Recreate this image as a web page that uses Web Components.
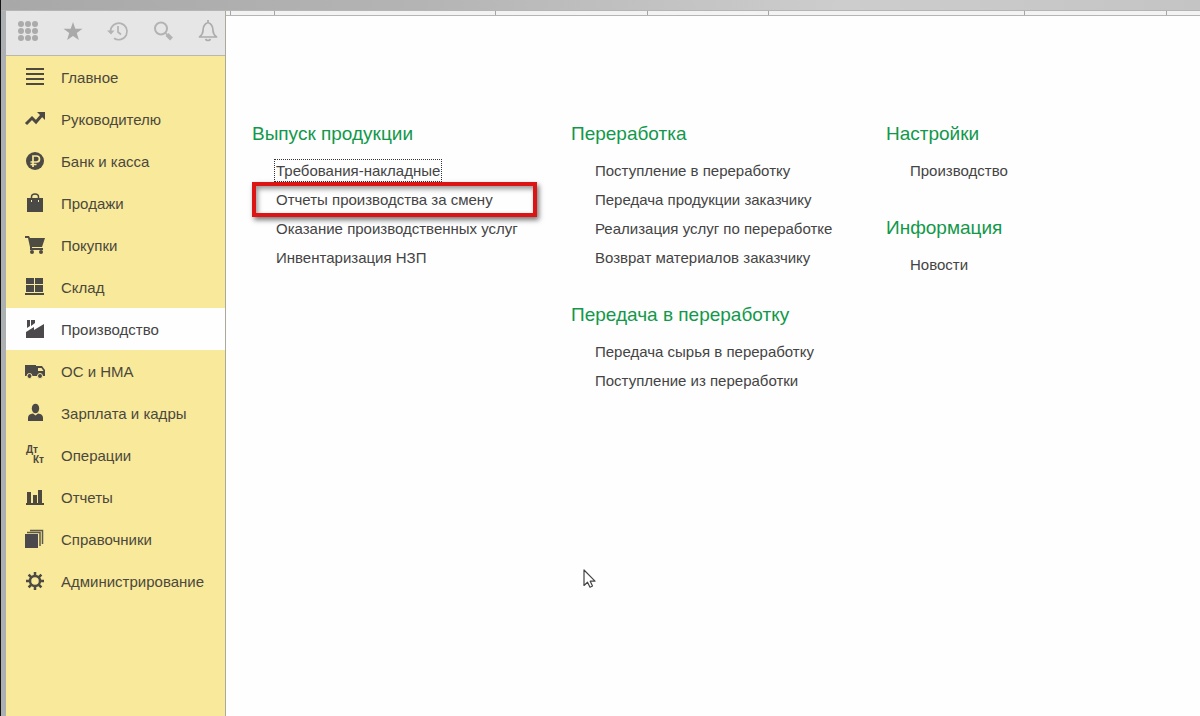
<!DOCTYPE html>
<html lang="ru">
<head>
<meta charset="utf-8">
<title>Производство</title>
<style>
html, body { height: 100%; }
body { margin: 0; font-family: "Liberation Sans", Arial, sans-serif; font-size: 15px; color: #444; background: #fefefe; }
</style>
</head>
<body>
<app-window></app-window>
<script>
const ICONS = {
  grid: '<g fill="#ababab"><circle cx="4" cy="4" r="3"/><circle cx="11" cy="4" r="3"/><circle cx="18" cy="4" r="3"/><circle cx="4" cy="11" r="3"/><circle cx="11" cy="11" r="3"/><circle cx="18" cy="11" r="3"/><circle cx="4" cy="18" r="3"/><circle cx="11" cy="18" r="3"/><circle cx="18" cy="18" r="3"/></g>',
  star: '<path fill="#a9a9a9" d="M11 2l2.300 6.700h7.200l-5.700 4.300 2.100 7L11 15.900 5.100 20l2.100-7L1.500 8.700h7.200z"/>',
  history: '<g fill="none" stroke="#b3b3b3" stroke-width="1.700"><path d="M3.500 11a8.300 8.300 0 1 1 3.500 7.200M11 6v6l3 2.500"/></g><path fill="#b3b3b3" d="M0 10.500h7.500L4 14.500z"/>',
  search: '<circle cx="9" cy="8.500" r="6" fill="none" stroke="#b3b3b3" stroke-width="2"/><path stroke="#b3b3b3" stroke-width="1.700" d="M13 12.500l3 3"/><path stroke="#b3b3b3" stroke-width="4" d="M15 14.500l4.500 4.500"/>',
  bell: '<g fill="none" stroke="#acacac" stroke-width="1.700" stroke-linejoin="round"><path d="M11 2.500c-4 1.500-5 4-5 8 0 3-1 4.500-3.500 6.500h17c-2.500-2-3.500-3.500-3.500-6.500 0-4-1-6.500-5-8zM11 0v3"/><path d="M8.500 19c1 2 4 2 5 0"/></g>',
  lines: '<path stroke="#4d493f" stroke-width="2" d="M2 3h18M2 8h18M2 13h18M2 18h18"/>',
  trend: '<path fill="none" stroke="#4d4844" stroke-width="3" d="M2 16l6-6 4 4 6-7"/><path fill="#4d4844" d="M13 4h8v8z"/>',
  ruble: '<circle cx="11" cy="11" r="9" fill="#4c4a43"/><path fill="none" stroke="#f9e99b" stroke-width="1.700" d="M9 17V6h3.500a3 3 0 0 1 0 6H6.500M6.500 14.500h6"/>',
  bag: '<path fill="#4b4945" d="M3 6h16v14H3z"/><path fill="none" stroke="#f9e99b" stroke-width="1" d="M7.500 10V6M14.500 10V6"/><path fill="none" stroke="#4b4945" stroke-width="1.500" d="M7.500 8V5c0-4 7-4 7 0v3"/>',
  cart: '<path fill="#4e4b42" d="M1 2h4l1 2h15l-3 9H8v1h11v2H6V13L4 4H1z"/><circle cx="8" cy="18" r="2" fill="#4e4b42"/><circle cx="17" cy="18" r="2" fill="#4e4b42"/>',
  store: '<path fill="#4b4945" d="M2 2h8v6H2zM11 2h8v6h-8zM2 9h8v7H2zM11 9h8v7h-8zM1 17h19v2H1z"/>',
  factory: '<path fill="#4b494b" d="M2 20v-6l8-5v3l10-6v14zM3 2h3v6l-3 2zM7 2h4v3L7 8z"/>',
  truck: '<path fill="#4c4a47" d="M1 5h11v11H1zM12 6h6l3 4v6h-9z"/><path fill="#f9e99b" d="M14 8h3.500l2 3H14z"/><g fill="#4c4a47" stroke="#f9e99b"><circle cx="5.500" cy="16" r="2.500"/><circle cx="16" cy="16" r="2.500"/></g>',
  person: '<ellipse cx="11.500" cy="6.500" rx="3.700" ry="4.800" fill="#4b4945"/><path fill="#4b4945" d="M4 19v-3c0-3 2-4 5-4.500l2.500 2 2.500-2c3 .5 5 1.500 5 4.500v3z"/>',
  dtkt: '<g fill="#4b4740" font-size="10" font-weight="bold" font-family="Liberation Sans, sans-serif"><text x="2" y="9">Дт</text><text x="9" y="19">Кт</text></g>',
  chart: '<path fill="#4d493f" d="M3 6h4v11H3zM9 9h4v8H9zM14 4h4v13h-4zM2 17h18v2H2z"/>',
  books: '<path fill="#4b494b" d="M1 6h13v14H1z"/><path fill="none" stroke="#5c5a4c" stroke-width="1.500" d="M3 4.500h13V18M6 2.500h12.500V16"/>',
  gear: '<circle cx="11" cy="11" r="5" fill="none" stroke="#4d4a43" stroke-width="2.500"/><path stroke="#4d4a43" stroke-width="2.500" d="M11 2v4M11 16v4M2 11h4M16 11h4M4.600 4.600l2.900 2.900M14.500 14.500l2.900 2.900M17.400 4.600l-2.900 2.900M7.500 14.500l-2.900 2.900"/>'
};

function render(el, html) {
  const t = document.createElement('template');
  t.innerHTML = html;
  el.attachShadow({ mode: 'open' }).append(t.content.cloneNode(true));
}

customElements.define('app-icon', class extends HTMLElement {
  connectedCallback() {
    render(this, `<style>:host{display:block;width:22px;height:22px;flex:none}svg{display:block}</style>
      <svg width="22" height="22" viewBox="0 0 22 22" aria-hidden="true">${ICONS[this.getAttribute('name')]}</svg>`);
  }
});

customElements.define('tool-button', class extends HTMLElement {
  connectedCallback() {
    render(this, `<style>:host{display:block}
      button{display:flex;align-items:center;justify-content:center;width:45px;height:40px;padding:0;border:0;background:none}</style>
      <button type="button" aria-label="${this.getAttribute('label')}"><app-icon name="${this.getAttribute('icon')}"></app-icon></button>`);
  }
});

customElements.define('menu-item', class extends HTMLElement {
  connectedCallback() {
    render(this, `<style>:host{display:block}
      a{display:flex;align-items:center;gap:15px;height:42px;padding-left:18px;color:#4b483c;text-decoration:none}
      :host([active]) a{background:#fefefe;color:#444}</style>
      <a href="#" ${this.hasAttribute('active') ? 'aria-current="page"' : ''}><app-icon name="${this.getAttribute('icon')}"></app-icon><slot></slot></a>`);
  }
});

customElements.define('side-bar', class extends HTMLElement {
  connectedCallback() {
    render(this, `<style>
      :host{display:flex;flex-direction:column;background:#f9e99b;border-right:1px solid #aaa99a}
      header{display:flex;height:45px;box-sizing:border-box;background:#e6e6e6;border-bottom:1px solid #bbb8a8}
      header tool-button:first-child{margin-left:-1px}</style>
      <header>
        <tool-button icon="grid" label="Разделы"></tool-button>
        <tool-button icon="star" label="Избранное"></tool-button>
        <tool-button icon="history" label="История"></tool-button>
        <tool-button icon="search" label="Поиск"></tool-button>
        <tool-button icon="bell" label="Оповещения"></tool-button>
      </header>
      <nav>
        <menu-item icon="lines">Главное</menu-item>
        <menu-item icon="trend">Руководителю</menu-item>
        <menu-item icon="ruble">Банк и касса</menu-item>
        <menu-item icon="bag">Продажи</menu-item>
        <menu-item icon="cart">Покупки</menu-item>
        <menu-item icon="store">Склад</menu-item>
        <menu-item icon="factory" active>Производство</menu-item>
        <menu-item icon="truck">ОС и НМА</menu-item>
        <menu-item icon="person">Зарплата и кадры</menu-item>
        <menu-item icon="dtkt">Операции</menu-item>
        <menu-item icon="chart">Отчеты</menu-item>
        <menu-item icon="books">Справочники</menu-item>
        <menu-item icon="gear">Администрирование</menu-item>
      </nav>`);
  }
});

customElements.define('tab-strip', class extends HTMLElement {
  connectedCallback() {
    render(this, `<style>
      :host{display:grid;grid-template-columns:44px 221px 152px 121px 256px 142px 1fr;height:4px;padding-left:4px;background:#f3f3f3;border-bottom:1px solid #b5b5b5}
      i{border-left:1px solid #a5a5a5}</style><i></i><i></i><i></i><i></i><i></i><i></i><i></i>`);
  }
});

customElements.define('link-group', class extends HTMLElement {
  connectedCallback() {
    render(this, `<style>:host{display:block}
      h2{margin:0;font-size:19px;line-height:42px;font-weight:normal;color:#12984a;white-space:nowrap}
      ul{margin:0;padding:1px 0 0 24px;list-style:none}</style>
      <h2>${this.getAttribute('heading')}</h2><ul><slot></slot></ul>`);
  }
});

customElements.define('section-link', class extends HTMLElement {
  connectedCallback() {
    render(this, `<style>
      :host{display:block;position:relative;line-height:29px;white-space:nowrap}
      li{display:block}
      a{color:#444;text-decoration:none}
      :host([focused]) a{display:inline-block;line-height:19px;outline:1px dotted #333;outline-offset:1px}
      :host([marked])::after{content:"";position:absolute;inset:-3px 34px -3px -24px;border:4px solid #dc1414;box-shadow:2px 3px 5px #0008,inset 2px 3px 5px #0006;pointer-events:none}</style>
      <li><a href="#"><slot></slot></a></li>`);
  }
});

customElements.define('section-panel', class extends HTMLElement {
  connectedCallback() {
    render(this, `<style>
      :host{display:grid;grid-template-columns:319px 315px 1fr;align-items:start;padding:97px 0 0 26px;background:#fefefe}
      div{display:grid;gap:22px}</style>
      <div>
        <link-group heading="Выпуск продукции">
          <section-link focused>Требования-накладные</section-link>
          <section-link marked>Отчеты производства за смену</section-link>
          <section-link>Оказание производственных услуг</section-link>
          <section-link>Инвентаризация НЗП</section-link>
        </link-group>
      </div>
      <div>
        <link-group heading="Переработка">
          <section-link>Поступление в переработку</section-link>
          <section-link>Передача продукции заказчику</section-link>
          <section-link>Реализация услуг по переработке</section-link>
          <section-link>Возврат материалов заказчику</section-link>
        </link-group>
        <link-group heading="Передача в переработку">
          <section-link>Передача сырья в переработку</section-link>
          <section-link>Поступление из переработки</section-link>
        </link-group>
      </div>
      <div>
        <link-group heading="Настройки"><section-link>Производство</section-link></link-group>
        <link-group heading="Информация"><section-link>Новости</section-link></link-group>
      </div>`);
  }
});

customElements.define('mouse-pointer', class extends HTMLElement {
  connectedCallback() {
    render(this, `<style>:host{display:block;position:absolute;left:582px;top:569px;pointer-events:none}svg{display:block}</style>
      <svg width="13" height="20" viewBox="0 0 13 20" aria-hidden="true"><path fill="#fff" stroke="#444" stroke-width="1.200" stroke-linejoin="round" d="M1 1v15.500l3.500-3.300 2.500 5 2.500-1.200-2.300-4.800H12z"/></svg>`);
  }
});

customElements.define('app-window', class extends HTMLElement {
  connectedCallback() {
    render(this, `<style>
      :host{display:grid;grid-template-rows:11px 1fr;min-height:100%;position:relative;box-sizing:border-box;border-left:1px solid #151515}
      .title{background:linear-gradient(90deg,#a8a8a8,#b4b4b4 35%,#cdcdcd 70%,#c4c4c4);border-bottom:1px solid #b5b5b5;box-sizing:border-box}
      .body{display:grid;grid-template-columns:220px 1fr;border-left:5px solid #adb0b3}
      main{display:grid;grid-template-rows:auto 1fr}</style>
      <div class="title"></div>
      <div class="body"><side-bar></side-bar><main><tab-strip></tab-strip><section-panel></section-panel></main></div>
      <mouse-pointer></mouse-pointer>`);
  }
});
</script>
</body>
</html>
